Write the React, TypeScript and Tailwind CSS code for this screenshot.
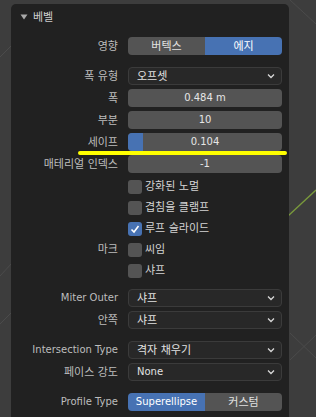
import type { ReactNode } from "react";

const font = "font-['DejaVu_Sans','Noto_Sans_CJK_KR',sans-serif]";
const isKr = (s: string) => /[가-힣]/.test(s);
const sz = (s: string) => (isKr(s) ? "text-[11px]" : "text-[10px]");

function Chevron() {
  return (
    <svg width="8" height="6" viewBox="0 0 8 6" className="shrink-0">
      <polyline points="1,1.5 4,4.5 7,1.5" fill="none" stroke="#d8d8d8" strokeWidth="1.3" />
    </svg>
  );
}

function Row({ label, children, className = "" }: { label?: string; children: ReactNode; className?: string }) {
  return (
    <div className={`flex h-[18px] items-center ${className}`}>
      <div className={`w-[107px] text-right text-[#bdbdbd] leading-none ${label ? sz(label) : ""}`}>{label}</div>
      <div className="ml-[10px] h-full w-[154px]">{children}</div>
    </div>
  );
}

function Dropdown({ value }: { value: string }) {
  return (
    <div className="flex h-full items-center justify-between rounded-[4px] border border-[#3b3b3b] bg-[#282828] pl-[8px] pr-[6px]">
      <span className={`${sz(value)} leading-none text-[#e2e2e2]`}>{value}</span>
      <Chevron />
    </div>
  );
}

function NumField({ value, fill }: { value: string; fill?: number }) {
  return (
    <div className="relative flex h-full items-center justify-center overflow-hidden rounded-[4px] bg-[#545454]">
      {fill !== undefined && (
        <div className="absolute inset-y-0 left-0 bg-[#4772b3]" style={{ width: `${fill * 100}%` }} />
      )}
      <span className="relative text-[10px] leading-none text-[#e6e6e6]">{value}</span>
    </div>
  );
}

function Toggle({ items, active }: { items: string[]; active: number }) {
  return (
    <div className="flex h-full overflow-hidden rounded-[4px]">
      {items.map((t, i) => (
        <div
          key={t}
          className={`flex flex-1 items-center justify-center ${sz(t)} leading-none ${
            i === active ? "bg-[#4772b3] text-white" : "bg-[#545454] text-[#e2e2e2]"
          }`}
        >
          {t}
        </div>
      ))}
    </div>
  );
}

function Check({ label, checked, side }: { label: string; checked?: boolean; side?: string }) {
  return (
    <div className="flex h-[21px] items-center">
      <div className="w-[107px] text-right text-[11px] leading-none text-[#bdbdbd]">{side}</div>
      <div className="ml-[10px] flex items-center gap-[3px]">
        <div
          className={`flex h-[14px] w-[14px] items-center justify-center rounded-[3px] ${
            checked ? "bg-[#4772b3]" : "bg-[#545454]"
          }`}
        >
          {checked && (
            <svg width="10" height="10" viewBox="0 0 10 10">
              <polyline points="1.5,5.5 4,8 8.5,2" fill="none" stroke="#fff" strokeWidth="1.6" />
            </svg>
          )}
        </div>
        <span className="text-[11px] leading-none text-[#d4d4d4]">{label}</span>
      </div>
    </div>
  );
}

export default function App() {
  return (
    <div className={`relative h-[417px] w-[316px] overflow-hidden bg-[#3d3d3d] ${font}`}>
      {/* viewport grid lines behind the panel */}
      <svg className="absolute inset-0" width="316" height="417">
        <line x1="0" y1="57" x2="12" y2="45" stroke="#4b4b4b" strokeWidth="1" />
        <line x1="0" y1="276" x2="12" y2="263" stroke="#4b4b4b" strokeWidth="1" />
        <line x1="0" y1="324" x2="12" y2="312" stroke="#4b4b4b" strokeWidth="1" />
        <line x1="290" y1="0" x2="316" y2="24" stroke="#4b4b4b" strokeWidth="1" />
        <line x1="316" y1="190" x2="288" y2="216" stroke="#7a9a3c" strokeWidth="1.3" />
        <line x1="290" y1="333" x2="316" y2="358" stroke="#4b4b4b" strokeWidth="1" />
        <line x1="290" y1="360" x2="316" y2="335" stroke="#4b4b4b" strokeWidth="1" />
      </svg>

      <div className="relative ml-[11px] mt-[4px] flex h-[430px] w-[278px] flex-col rounded-t-[5px] bg-[#212121] pr-[7px]">
        <div className="flex h-[26px] items-center pl-[9px]">
          <svg width="8" height="6" viewBox="0 0 8 6" className="mr-[5px]">
            <polygon points="0.5,0.5 7.5,0.5 4,5.5" fill="#a8a8a8" />
          </svg>
          <span className="text-[11px] leading-none text-[#cfcfcf]">베벨</span>
        </div>

        <Row label="영향" className="mt-[7px]">
          <Toggle items={["버텍스", "에지"]} active={1} />
        </Row>
        <Row label="폭 유형" className="mt-[12px]">
          <Dropdown value="오프셋" />
        </Row>
        <Row label="폭" className="mt-[4px]">
          <NumField value="0.484 m" />
        </Row>
        <Row label="부분" className="mt-[4px]">
          <NumField value="10" />
        </Row>
        <Row label="세이프" className="mt-[4px]">
          <NumField value="0.104" fill={0.1} />
        </Row>
        <Row label="매테리얼 인덱스" className="mt-[4px]">
          <NumField value="-1" />
        </Row>

        <div className="mt-[3px] flex flex-col">
          <Check label="강화된 노멀" />
          <Check label="겹침을 클램프" />
          <Check label="루프 슬라이드" checked />
          <Check label="씨임" side="마크" />
          <Check label="샤프" />
        </div>

        <Row label="Miter Outer" className="mt-[8px]">
          <Dropdown value="샤프" />
        </Row>
        <Row label="안쪽" className="mt-[4px]">
          <Dropdown value="샤프" />
        </Row>
        <Row label="Intersection Type" className="mt-[12px]">
          <Dropdown value="격자 채우기" />
        </Row>
        <Row label="페이스 강도" className="mt-[4px]">
          <Dropdown value="None" />
        </Row>
        <Row label="Profile Type" className="mt-[12px]">
          <Toggle items={["Superellipse", "커스텀"]} active={0} />
        </Row>
      </div>

      {/* yellow annotation stroke */}
      <div className="absolute left-[78px] top-[151px] h-[4px] w-[209px] rounded-full bg-[#ffff00]" />
    </div>
  );
}
